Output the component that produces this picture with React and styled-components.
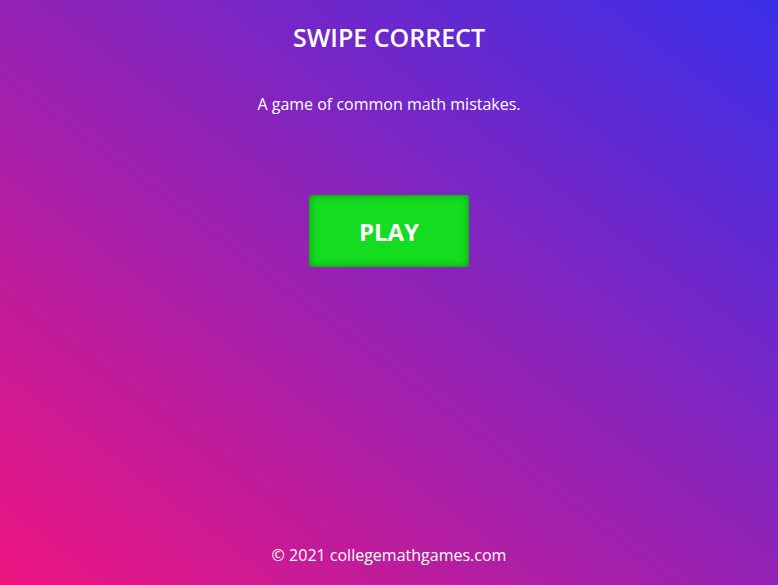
import React from 'react'
import styled, { createGlobalStyle } from 'styled-components'

const GlobalStyle = createGlobalStyle`
  html, body {
    margin: 0;
    padding: 0;
    height: 100%;
  }
  body {
    font-family: "Open Sans", "Liberation Sans", sans-serif;
    color: #fff;
  }
`

const Page = styled.div`
  min-height: 100vh;
  display: flex;
  flex-direction: column;
  align-items: center;
  background: linear-gradient(to top right, #ee1580, #3a2fe9);
  box-sizing: border-box;
`

const Title = styled.h1`
  margin: 21px 0 0;
  font-size: 25px;
  font-weight: 600;
  line-height: 32px;
`

const Subtitle = styled.p`
  margin: 40px 0 0;
  font-size: 16px;
  line-height: 22px;
`

const PlayButton = styled.button`
  margin-top: 80px;
  width: 160px;
  height: 72px;
  border: none;
  border-radius: 3px;
  background: #14dc1e;
  box-shadow: inset 0 0 7px rgba(0, 80, 0, 0.55);
  color: #fff;
  font-family: inherit;
  font-size: 24px;
  font-weight: 700;
  cursor: pointer;
`

const Footer = styled.footer`
  margin-top: auto;
  padding-bottom: 19px;
  font-size: 16px;
  line-height: 22px;
`

export default function App () {
  return (
    <>
      <GlobalStyle />
      <Page>
        <Title>SWIPE CORRECT</Title>
        <Subtitle>A game of common math mistakes.</Subtitle>
        <PlayButton>PLAY</PlayButton>
        <Footer>© 2021 collegemathgames.com</Footer>
      </Page>
    </>
  )
}
